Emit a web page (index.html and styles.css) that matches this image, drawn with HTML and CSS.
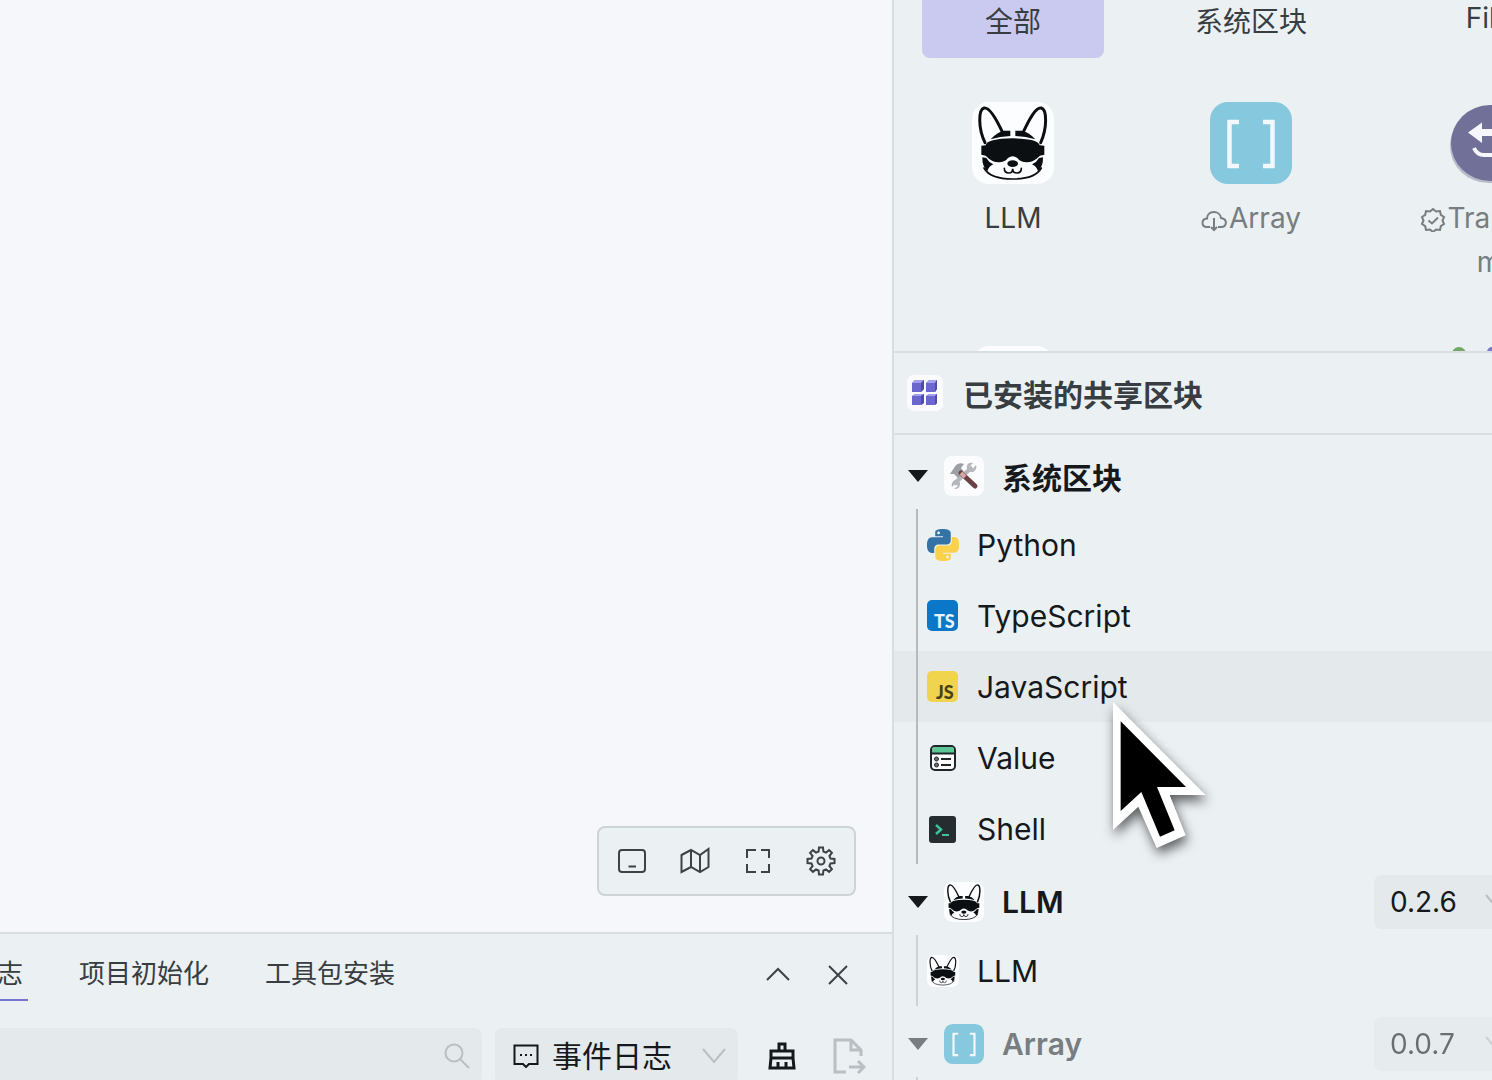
FILE: index.html
```html
<!DOCTYPE html>
<html lang="zh-CN">
<head>
<meta charset="utf-8">
<meta name="viewport" content="width=device-width, initial-scale=1">
<title>Flow</title>
<link rel="stylesheet" href="styles.css">
</head>
<body>
<svg class="defs" aria-hidden="true">
  <symbol id="dog" viewBox="240 307 246 246">
    <rect x="240" y="307" width="246" height="246" rx="50" fill="#fcfdfe"/>
    <g fill="none" stroke="#0b0f12" stroke-width="9" stroke-linecap="round">
      <path d="M279 429C258 386 259 330 276 325C293 321 315 362 332 399"/>
      <path d="M446 429C466 386 465 330 448 325C431 321 410 362 393 399"/>
    </g>
    <g fill="#0b0f12">
      <path d="M296 419Q316 396 336 393H355V409Q325 410 296 419Z"/>
      <path d="M370 393H389Q410 396 430 419Q400 410 370 409Z"/>
      <path d="M281 437Q284 417 362 416Q440 417 443 437L457 438V465L444 468Q424 488 404 488Q386 488 376 475Q362 464 348 475Q338 488 320 488Q300 488 281 468L268 465V438Z"/>
      <path d="M271 473L283 475Q290 488 304 494Q290 500 286 515Q270 500 271 473Z"/>
      <path d="M453 473L441 475Q434 488 420 494Q434 500 438 515Q454 500 453 473Z"/>
      <ellipse cx="362" cy="492" rx="16" ry="10"/>
    </g>
    <g fill="none" stroke="#0b0f12" stroke-width="5" stroke-linecap="round">
      <path d="M276 505Q294 538 362 538Q430 538 448 505"/>
      <path d="M337 506Q337 520 350 520Q362 520 362 507Q362 520 375 520Q388 520 388 506"/>
    </g>
  </symbol>
  <symbol id="brackets" viewBox="0 0 82 82">
    <rect width="82" height="82" rx="18" fill="#86c8dd"/>
    <path d="M29 20H19.500V64H29M53 20H62.500V64H53" fill="none" stroke="#f2f8fc" stroke-width="4.500"/>
  </symbol>
  <symbol id="chev" viewBox="0 0 24 16"><path d="M1 1L12 14L23 1" fill="none" stroke="currentColor" stroke-width="2"/></symbol>
  <symbol id="tri" viewBox="0 0 20 12"><path d="M0 0H20L10 12Z" fill="currentColor"/></symbol>
</svg>

<div class="app">
  <main class="work">
    <section class="canvas">
      <div class="tools">
        <button type="button" aria-label="面板"><svg width="28" height="28" viewBox="0 0 28 28"><rect x="1" y="3" width="26" height="22" rx="3"/><path d="M10.500 19.500H18"/></svg></button>
        <button type="button" aria-label="小地图"><svg width="30" height="28" viewBox="0 0 30 28"><path d="M1.500 8L11 3L20 8L28.500 2V20L20 25L11 20L1.500 25ZM11 3V20M20 8V25"/></svg></button>
        <button type="button" aria-label="适应画布"><svg width="26" height="28" viewBox="0 0 26 28"><path d="M2 11V3H11M16 3H24V11M24 17V25H16M11 25H2V17"/></svg></button>
        <button type="button" aria-label="设置"><svg width="30" height="30" viewBox="0 0 30 30"><path d="M12.600 5.500L13 1.500H17L17.400 5.500L20 6.600L23.100 4.100L25.900 6.900L23.400 10L24.500 12.600L28.500 13V17L24.500 17.400L23.400 20L25.900 23.100L23.100 25.900L20 23.400L17.400 24.500L17 28.500H13L12.600 24.500L10 23.400L6.900 25.900L4.100 23.100L6.600 20L5.500 17.400L1.500 17V13L5.500 12.600L6.600 10L4.100 6.900L6.900 4.100L10 6.600Z"/><circle cx="15" cy="15" r="3.500"/></svg></button>
      </div>
    </section>
    <section class="logs">
      <header class="logs-head">
        <nav class="logs-tabs">
          <button type="button" class="logs-tab active">事件日志</button>
          <button type="button" class="logs-tab">项目初始化</button>
          <button type="button" class="logs-tab">工具包安装</button>
        </nav>
        <div class="logs-actions">
          <button type="button" aria-label="展开"><svg width="24" height="24" viewBox="0 0 24 24"><path d="M1 17L12 6L23 17"/></svg></button>
          <button type="button" aria-label="关闭"><svg width="24" height="24" viewBox="0 0 24 24"><path d="M3 3L21 21M21 3L3 21"/></svg></button>
        </div>
      </header>
      <div class="filters">
        <label class="search">
          <input type="search" aria-label="搜索">
          <svg width="26" height="26" viewBox="0 0 26 26"><circle cx="10" cy="10" r="8.500"/><path d="M16 16L25 25"/></svg>
        </label>
        <label class="kind">
          <svg class="chat" width="26" height="24" viewBox="0 0 26 24"><path d="M1.500 1.500H24.500V20H16L13 23L10 20H1.500Z"/><path d="M7 11H9M12 11H14M17 11H19"/></svg>
          <select aria-label="日志类型"><option>事件日志</option></select>
          <svg class="chevron" width="24" height="16"><use href="#chev"/></svg>
        </label>
        <button type="button" class="clear" aria-label="清空"><svg width="28" height="28" viewBox="0 0 28 28"><path d="M11 9V2H17V9M3 16V9H25V16M3 16H25L26 26H2ZM10 26V20M18 26V20"/></svg></button>
        <button type="button" class="export" aria-label="导出"><svg width="34" height="36" viewBox="0 0 34 36"><path d="M14 34H3V2H19L29 12V18M19 2V12H29M17 29H31M26 23L32 29L26 35"/></svg></button>
      </div>
    </section>
  </main>

  <aside class="side">
    <section class="library">
      <nav class="cats">
        <button type="button" class="cat active">全部</button>
        <button type="button" class="cat">系统区块</button>
        <button type="button" class="cat">File</button>
      </nav>
      <div class="tiles">
        <div class="tile">
          <svg width="82" height="82"><use href="#dog"/></svg>
          <p>LLM</p>
        </div>
        <div class="tile remote">
          <svg width="82" height="82"><use href="#brackets"/></svg>
          <p><svg class="mark" width="26" height="22" viewBox="0 0 26 22"><path d="M9 17H6C0 17 0 9 6 8.500C6 0 19 0 20 8C27 9 26 17 20 17H17M13 8V20M10 17L13 20L16 17"/></svg>Array</p>
        </div>
        <div class="tile remote">
          <svg width="82" height="82" viewBox="0 0 82 82"><ellipse cx="41" cy="44" rx="39" ry="37" fill="#b7bac8"/><ellipse cx="42" cy="41" rx="39" ry="38" fill="#707098"/><path d="M20 30.500L34 20.500V27H62V34H34V41Z" fill="#f6f7fc"/><path d="M26 46Q29 53 36 53H62V46" fill="none" stroke="#f6f7fc" stroke-width="4"/></svg>
          <p><svg class="mark" width="26" height="24" viewBox="0 0 26 24"><path d="M13 1L16 3.500L20 3L20.800 6.800L24 9L22.500 12.500L24 16L20.800 18.200L20 22L16 21.500L13 24L10 21.500L6 22L5.200 18.200L2 16L3.500 12.500L2 9L5.200 6.800L6 3L10 3.500Z"/><path d="M8.500 12.500L12 15.500L18 9.500"/></svg>Transfor<br>m</p>
        </div>
        <div class="tile"><svg width="82" height="82" viewBox="0 0 82 82"><rect width="82" height="82" rx="18" fill="#fcfdfe"/></svg></div>
        <div class="tile"></div>
        <div class="tile"><svg width="82" height="82" viewBox="0 0 82 82"><circle cx="11" cy="8" r="7" fill="#74a865"/><circle cx="44" cy="6" r="5" fill="#7b78cf"/></svg></div>
      </div>
    </section>

    <section class="installed">
      <h2 class="title">
        <svg width="36" height="36" viewBox="0 0 36 36"><rect width="36" height="36" rx="7" fill="#fbfbfe"/><g fill="#6b67cf"><path d="M5 8L8 5H17V14L14 17H5ZM19 8L22 5H30V14L28 17H19ZM5 21L8 19H17V28L14 30H5ZM19 21L22 19H30V28L28 30H19Z"/></g><g fill="#a3a1ee"><path d="M5 8L8 5H17L14 8ZM19 8L22 5H30L28 8ZM5 21L8 19H17L14 21ZM19 21L22 19H30L28 21Z"/></g><g fill="#504ba8"><path d="M14 8L17 5V14L14 17ZM28 8L30 5V14L28 17ZM14 21L17 19V28L14 30ZM28 21L30 19V28L28 30Z"/></g></svg>
        已安装的共享区块
      </h2>
      <div class="tree">
        <div class="group">
          <button type="button" class="toggle">
            <svg class="tri" width="20" height="12"><use href="#tri"/></svg>
            <svg width="40" height="40" viewBox="0 0 40 40"><rect width="40" height="40" rx="8" fill="#fcfcfe"/><path d="M10 28L28 11" stroke="#b4b6bc" stroke-width="4"/><path d="M32 9L28 14L25 11L29 7C24 6 21 10 24 14C28 19 34 14 32 9ZM14 24C9 23 7 28 8 31L11 28L14 30L10 33C16 34 18 27 14 24Z" fill="#b4b6bc"/><path d="M6 18L12 9Q16 6 20 8L17 12L20 16L14 22L10 18Z" fill="#9c9fa6"/><path d="M17 17L31 30" stroke="#6a4145" stroke-width="5" stroke-linecap="round"/><path d="M17 17L21 21" stroke="#d9a8a4" stroke-width="4"/></svg>
            <span>系统区块</span>
          </button>
        </div>
        <ul class="items">
          <li><a href="#python"><svg width="32" height="32" viewBox="0 0 24 24"><path fill="#3572a5" d="M14.250.18l.9.2.73.26.59.3.45.32.34.34.25.34.16.33.1.3.04.26.02.2-.01.13V8.500l-.05.63-.13.55-.21.46-.26.38-.3.31-.33.25-.35.19-.35.14-.33.1-.3.07-.26.04-.21.02H8.770l-.69.05-.59.14-.5.22-.41.27-.33.32-.27.35-.2.36-.15.37-.1.35-.07.32-.04.27-.02.21v3.060H3.170l-.21-.03-.28-.07-.32-.12-.35-.18-.36-.26-.36-.36-.35-.46-.32-.59-.28-.73-.21-.88-.14-1.050-.05-1.230.06-1.220.16-1.040.24-.87.32-.71.36-.57.4-.44.42-.33.42-.24.4-.16.36-.1.32-.05.24-.01h.16l.06.01h8.160v-.83H6.180l-.01-2.750-.02-.37.05-.34.11-.31.17-.28.25-.26.31-.23.38-.2.44-.18.51-.15.58-.12.64-.1.71-.06.77-.04.84-.02 1.270.05zm-6.300 1.980l-.23.33-.08.41.08.41.23.34.33.22.41.09.41-.09.33-.22.23-.34.08-.41-.08-.41-.23-.33-.33-.22-.41-.09-.41.09z"/><path fill="#fbd14b" d="M21.100 6.110l.28.06.32.12.35.18.36.27.36.35.35.47.32.59.28.73.21.88.14 1.040.05 1.230-.06 1.230-.16 1.040-.24.86-.32.71-.36.57-.4.45-.42.33-.42.24-.4.16-.36.09-.32.05-.24.02-.16-.01h-8.220v.82h5.840l.01 2.760.02.36-.05.34-.11.31-.17.29-.25.25-.31.24-.38.2-.44.17-.51.15-.58.13-.64.09-.71.07-.77.04-.84.01-1.270-.04-1.070-.14-.9-.2-.73-.25-.59-.3-.45-.33-.34-.34-.25-.34-.16-.33-.1-.3-.04-.25-.02-.2.01-.13v-5.340l.05-.64.13-.54.21-.46.26-.38.3-.32.33-.24.35-.2.35-.14.33-.1.3-.06.26-.04.21-.02.13-.01h5.840l.69-.05.59-.14.5-.21.41-.28.33-.32.27-.35.2-.36.15-.36.1-.35.07-.32.04-.28.02-.21V6.070h2.090l.14.01zm-6.470 14.250l-.23.33-.08.41.08.41.23.33.33.23.41.08.41-.08.33-.23.23-.33.08-.41-.08-.41-.23-.33-.33-.23-.41-.08-.41.08z"/></svg>Python</a></li>
          <li><a href="#typescript"><svg width="32" height="32" viewBox="0 0 32 32"><rect width="31" height="31" rx="5" fill="#0a77c9"/><text x="7" y="28" class="glyph" fill="#e9f4fb">TS</text></svg>TypeScript</a></li>
          <li class="hover"><a href="#javascript"><svg width="32" height="32" viewBox="0 0 32 32"><rect width="31" height="31" rx="5" fill="#f1d44e"/><text x="9" y="28" class="glyph" fill="#4a4318">JS</text></svg>JavaScript</a></li>
          <li><a href="#value"><svg width="32" height="32" viewBox="0 0 32 32"><rect x="4" y="4" width="24" height="24" rx="4" fill="#fff" stroke="#1e2629" stroke-width="2"/><path d="M5 11V8Q5 5 8 5H24Q27 5 27 8V11Z" fill="#5cc794"/><path d="M4 11.500H28M14 17H24M14 23H24" stroke="#1e2629" stroke-width="2"/><circle cx="9.500" cy="17" r="2" fill="#6b7073" stroke="#1e2629"/><circle cx="9.500" cy="23" r="2" fill="#6b7073" stroke="#1e2629"/></svg>Value</a></li>
          <li><a href="#shell"><svg width="32" height="32" viewBox="0 0 32 32"><rect x="2" y="3" width="27" height="27" rx="3" fill="#262d31"/><path d="M9 12L14 16.500L9 21" fill="none" stroke="#3fbf9a" stroke-width="2.500"/><path d="M15 22H22" stroke="#3fbf9a" stroke-width="2"/></svg>Shell</a></li>
        </ul>
        <div class="group">
          <button type="button" class="toggle">
            <svg class="tri" width="20" height="12"><use href="#tri"/></svg>
            <svg width="40" height="40"><use href="#dog"/></svg>
            <span>LLM</span>
          </button>
          <div class="version">
            <select aria-label="LLM 版本"><option>0.2.6</option></select>
            <svg class="chevron" width="24" height="16"><use href="#chev"/></svg>
          </div>
        </div>
        <ul class="items light">
          <li><a href="#llm"><svg width="32" height="32"><use href="#dog"/></svg>LLM</a></li>
        </ul>
        <div class="group dim">
          <button type="button" class="toggle">
            <svg class="tri" width="20" height="12"><use href="#tri"/></svg>
            <svg width="40" height="40"><use href="#brackets"/></svg>
            <span>Array</span>
          </button>
          <div class="version">
            <select aria-label="Array 版本"><option>0.0.7</option></select>
            <svg class="chevron" width="24" height="16"><use href="#chev"/></svg>
          </div>
        </div>
        <ul class="items light">
          <li><a href="#array"><svg width="32" height="32"><use href="#brackets"/></svg>Array</a></li>
        </ul>
      </div>
    </section>

    <svg class="pointer" width="94" height="147" viewBox="0 0 282 441" aria-hidden="true"><path d="M0 0L278 279H170L218 400L131 438L76 314L0 384Z" fill="#fff"/><path d="M23 58L219 255H132L185 385L141 404L85 270L23 327Z" fill="#000"/></svg>
  </aside>
</div>
</body>
</html>
```
FILE: styles.css
```css
* { box-sizing: border-box; }

body {
  margin: 0;
  background: #ebf0f3;
  color: #15191c;
  font-family: Inter, "Noto Sans CJK SC", sans-serif;
  font-size: 30px;
}

button, select, input {
  margin: 0;
  padding: 0;
  border: 0;
  background: none;
  color: inherit;
  font: inherit;
  appearance: none;
}

svg { flex: none; }
.defs { position: absolute; width: 0; height: 0; }

.app {
  display: grid;
  grid-template-columns: minmax(0, 1fr) 600px;
  height: 100vh;
  overflow: hidden;
}

/* Canvas and log panel */
.work {
  display: flex;
  flex-direction: column;
  min-height: 0;
}

.canvas {
  flex: 1;
  display: flex;
  align-items: flex-end;
  justify-content: flex-end;
  padding: 36px;
  background: #f5f7fb;
}

.tools {
  display: flex;
  gap: 23px;
  padding: 13px;
  border: 2px solid #cdd4d7;
  border-radius: 8px;
  background: #ebf0f3;
}

.tools button,
.logs-actions button,
.filters > button {
  flex: none;
  display: grid;
  place-items: center;
  width: 40px;
  height: 40px;
}

.work svg {
  fill: none;
  stroke: currentColor;
  stroke-width: 2;
}

.tools button, .logs-actions { color: #3c4245; }

.logs {
  flex: none;
  height: 148px;
  overflow: hidden;
  border-top: 2px solid #d8dee1;
}

.logs-head {
  display: flex;
  justify-content: space-between;
  align-items: center;
  height: 82px;
  padding-right: 34px;
}

.logs-tabs {
  display: flex;
  gap: 46px;
  margin-left: -86px;
}

.logs-tab {
  height: 52px;
  padding: 0 5px;
  border-bottom: 2px solid transparent;
  color: #373d40;
  font-size: 26px;
  line-height: 50px;
  white-space: nowrap;
}

.logs-tab.active { border-color: #7476d2; }

.logs-actions {
  display: flex;
  gap: 20px;
}

.filters {
  display: flex;
  align-items: center;
  padding: 12px 23px 12px 0;
}

.search {
  flex: 1;
  display: flex;
  align-items: center;
  min-width: 0;
  height: 56px;
  margin-right: 13px;
  padding-right: 12px;
  border-radius: 0 8px 8px 0;
  background: #e4e9ec;
  color: #b9bfc2;
}

.search input { flex: 1; min-width: 0; }

.kind {
  flex: none;
  display: flex;
  align-items: center;
  width: 243px;
  height: 56px;
  margin-right: 24px;
  padding: 0 12px 0 18px;
  border-radius: 8px;
  background: #e4e9ec;
}

.kind select { flex: 1; margin-left: 13px; }
.chevron { color: #b9bfc2; }
.filters > .export { margin-left: 27px; color: #b9bfc2; }
.clear svg, .export svg { stroke-width: 3; }

/* Block library */
.side {
  position: relative;
  display: flex;
  flex-direction: column;
  min-width: 0;
  min-height: 0;
  overflow: hidden;
  border-left: 2px solid #d8dee1;
}

.library {
  flex: none;
  height: 353px;
  overflow: hidden;
  border-bottom: 2px solid #d8dee1;
}

.installed {
  flex: 1;
  min-height: 0;
  overflow: hidden;
}

.cats, .tiles {
  display: grid;
  grid-template-columns: repeat(3, 238px);
}

.cat {
  height: 58px;
  margin: 0 28px;
  padding-bottom: 22px;
  border-radius: 0 0 8px 8px;
  color: #373d40;
  font-size: 28px;
}

.cat.active { background: #cac9f0; }
.tiles { padding-top: 44px; }

.tile {
  display: flex;
  flex-direction: column;
  align-items: center;
  gap: 12px;
  height: 244px;
}

.tile p {
  margin: 0;
  color: #373d40;
  font-size: 28px;
  line-height: 44px;
  text-align: center;
}

.tile.remote p { color: #777d80; }

.mark {
  margin-right: 2px;
  vertical-align: -4px;
  fill: none;
  stroke: currentColor;
  stroke-width: 2;
}

/* Installed blocks */
.title {
  display: flex;
  align-items: center;
  gap: 20px;
  height: 82px;
  margin: 0;
  padding-left: 13px;
  border-bottom: 2px solid #d8dee1;
  color: #373d40;
  font-size: 30px;
  font-weight: 600;
}

.tree {
  width: 640px;
  padding-top: 3px;
}

.group {
  display: flex;
  align-items: center;
  justify-content: space-between;
  height: 71px;
  padding: 4px 20px 0 14px;
}

.toggle {
  display: flex;
  align-items: center;
  font-weight: 600;
}

.toggle span { margin-left: 18px; }
.tri { margin-right: 16px; }
.dim .toggle { color: #777d80; }
.dim .version { opacity: .6; }

.version {
  position: relative;
  width: 140px;
}

.version select {
  width: 100%;
  height: 54px;
  padding-left: 16px;
  border-radius: 8px;
  background: #e4e9ec;
  font-size: 28px;
}

.version .chevron {
  position: absolute;
  top: 19px;
  right: 5px;
}

.items {
  margin: 0;
  padding: 0 0 0 22px;
  list-style: none;
  background: linear-gradient(#b4babd, #b4babd) 22px 0 / 2px 100% no-repeat;
}

.items.light { background-image: linear-gradient(#cdd2d5, #cdd2d5); }

.items a {
  display: flex;
  align-items: center;
  gap: 18px;
  height: 71px;
  padding-left: 11px;
  color: inherit;
  text-decoration: none;
}

.hover { box-shadow: -22px 0 #e4e9ec; background: #e4e9ec; border-left: 2px solid #b4babd; }
.items .hover a { padding-left: 9px; }

.glyph {
  font-family: Lato, sans-serif;
  font-size: 18px;
  font-weight: 900;
}

.pointer {
  position: absolute;
  top: 702px;
  left: 219px;
  filter: drop-shadow(2px 6px 6px rgba(0, 0, 0, .6));
  overflow: visible;
}
```
